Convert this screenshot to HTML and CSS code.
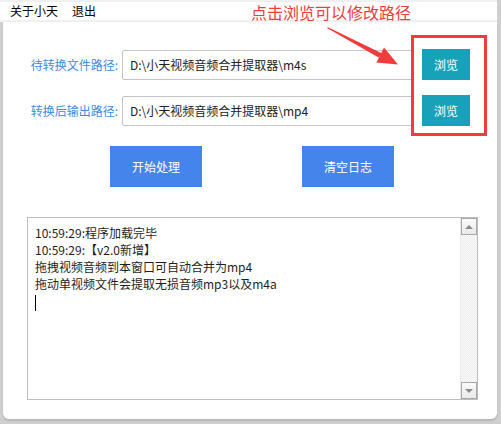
FILE: index.html
```
<!DOCTYPE html>
<html lang="zh">
<head>
<meta charset="utf-8">
<title>小天视频音频合并提取器</title>
<link rel="stylesheet" href="styles.css">
</head>
<body>
<div class="app">
  <div class="menu">
    <span class="menu-item">关于小天</span>
    <span class="menu-item">退出</span>
  </div>
  <div class="panel">
    <div class="row">
      <label class="label">待转换文件路径:</label>
      <div class="input">D:\小天视频音频合并提取器\m4s</div>
      <button class="browse">浏览</button>
    </div>
    <div class="row row2">
      <label class="label">转换后输出路径:</label>
      <div class="input">D:\小天视频音频合并提取器\mp4</div>
      <button class="browse">浏览</button>
    </div>
    <div class="actions">
      <button class="action">开始处理</button>
      <button class="action">清空日志</button>
    </div>
    <div class="log">
      <div class="log-text">
        <div class="line">10:59:29:程序加载完毕</div>
        <div class="line">10:59:29:【v2.0新增】</div>
        <div class="line">拖拽视频音频到本窗口可自动合并为mp4</div>
        <div class="line">拖动单视频文件会提取无损音频mp3以及m4a</div>
        <div class="line"><span class="caret"></span></div>
      </div>
      <div class="scrollbar">
        <div class="sb-btn"><span class="tri-up"></span></div>
        <div class="sb-track"></div>
        <div class="sb-btn"><span class="tri-down"></span></div>
      </div>
    </div>
  </div>
  <div class="hint">点击浏览可以修改路径</div>
  <div class="redbox"></div>
  <svg class="arrow" width="501" height="424" viewBox="0 0 501 424">
    <polygon points="327,28 328,27.2 382.2,53.5 378.6,57.5" fill="#f23b3b"/>
    <polygon points="398,64.5 376.4,62.4 384,47.6" fill="#f23b3b"/>
  </svg>
</div>
</body>
</html>
```
FILE: styles.css
```
* { box-sizing: border-box; }
html, body { margin: 0; padding: 0; }
body {
  width: 501px;
  height: 424px;
  background: #cfcfcf;
  font-family: "Noto Sans CJK SC", "Noto Sans", sans-serif;
  overflow: hidden;
}
.app {
  position: relative;
  width: 501px;
  height: 424px;
  display: flex;
  flex-direction: column;
}
.menu {
  margin-top: 2px;
  margin-right: 4px;
  height: 20px;
  background: #ffffff;
  border-bottom: 2px solid #f0f0f0;
  display: flex;
  align-items: center;
  gap: 14px;
  padding-left: 10px;
  font-size: 12px;
  line-height: 18px;
  color: #000;
  box-shadow: 0 -2px 0 #f0f0f0;
}
.panel {
  margin: 0 4px 0 3px;
  height: 397px;
  background: #ffffff;
  border-radius: 0 0 6px 6px;
  box-shadow: 0 2px 2px rgba(0,0,0,0.12);
  padding-top: 27px;
  display: flex;
  flex-direction: column;
}
.row {
  display: flex;
  align-items: center;
  height: 31px;
}
.row2 { margin-top: 15px; }
.label {
  width: 115px;
  text-align: right;
  font-size: 12px;
  color: #3f8ae0;
  line-height: 16px;
}
.input {
  margin-left: 4px;
  width: 291px;
  height: 30px;
  border: 1px solid #c4c4c4;
  border-radius: 2px;
  font-size: 12px;
  line-height: 28px;
  padding-left: 7px;
  color: #222;
  white-space: nowrap;
}
.browse {
  margin-left: 9px;
  width: 48px;
  height: 31px;
  border: 0;
  padding: 0;
  background: #17a2b9;
  color: #fff;
  font-family: inherit;
  font-size: 12px;
}
.actions {
  display: flex;
  gap: 100px;
  margin-top: 20px;
  padding-left: 107px;
}
.action {
  width: 92px;
  height: 41px;
  border: 0;
  padding: 0;
  background: #4584ea;
  color: #fff;
  font-family: inherit;
  font-size: 12px;
}
.log {
  margin-top: 30px;
  margin-left: 24px;
  width: 451px;
  height: 183px;
  border: 1px solid #bdbdbd;
  display: flex;
}
.log-text {
  flex: 1;
  padding: 6px 0 0 7px;
  font-size: 12px;
  color: #1e1e1e;
  white-space: nowrap;
  overflow: hidden;
}
.line {
  height: 17px;
  line-height: 17px;
}
.caret {
  display: inline-block;
  width: 1px;
  height: 16px;
  background: #000;
  vertical-align: middle;
}
.scrollbar {
  width: 17px;
  display: flex;
  flex-direction: column;
  border-left: 1px solid #e8e8e8;
}
.sb-track {
  flex: 1;
  background-color: #f4f4f4;
  background-image: repeating-conic-gradient(#ececec 0 25%, #fbfbfb 0 50%);
  background-size: 2px 2px;
}
.sb-btn {
  height: 17px;
  background: linear-gradient(#fafafa, #e9e9e9);
  border: 1px solid #a8a8a8;
  display: flex;
  align-items: center;
  justify-content: center;
}
.tri-up {
  width: 0; height: 0;
  border-left: 4px solid transparent;
  border-right: 4px solid transparent;
  border-bottom: 4px solid #8a8a8a;
}
.tri-down {
  width: 0; height: 0;
  border-left: 4px solid transparent;
  border-right: 4px solid transparent;
  border-top: 4px solid #8a8a8a;
}
.hint {
  position: absolute;
  left: 251px;
  top: 1px;
  font-size: 16px;
  line-height: 22px;
  color: #f23b3b;
  white-space: nowrap;
}
.redbox {
  position: absolute;
  left: 411px;
  top: 35px;
  width: 76px;
  height: 101px;
  border: 3px solid #f23b3b;
}
.arrow {
  position: absolute;
  left: 0;
  top: 0;
  pointer-events: none;
}
```
